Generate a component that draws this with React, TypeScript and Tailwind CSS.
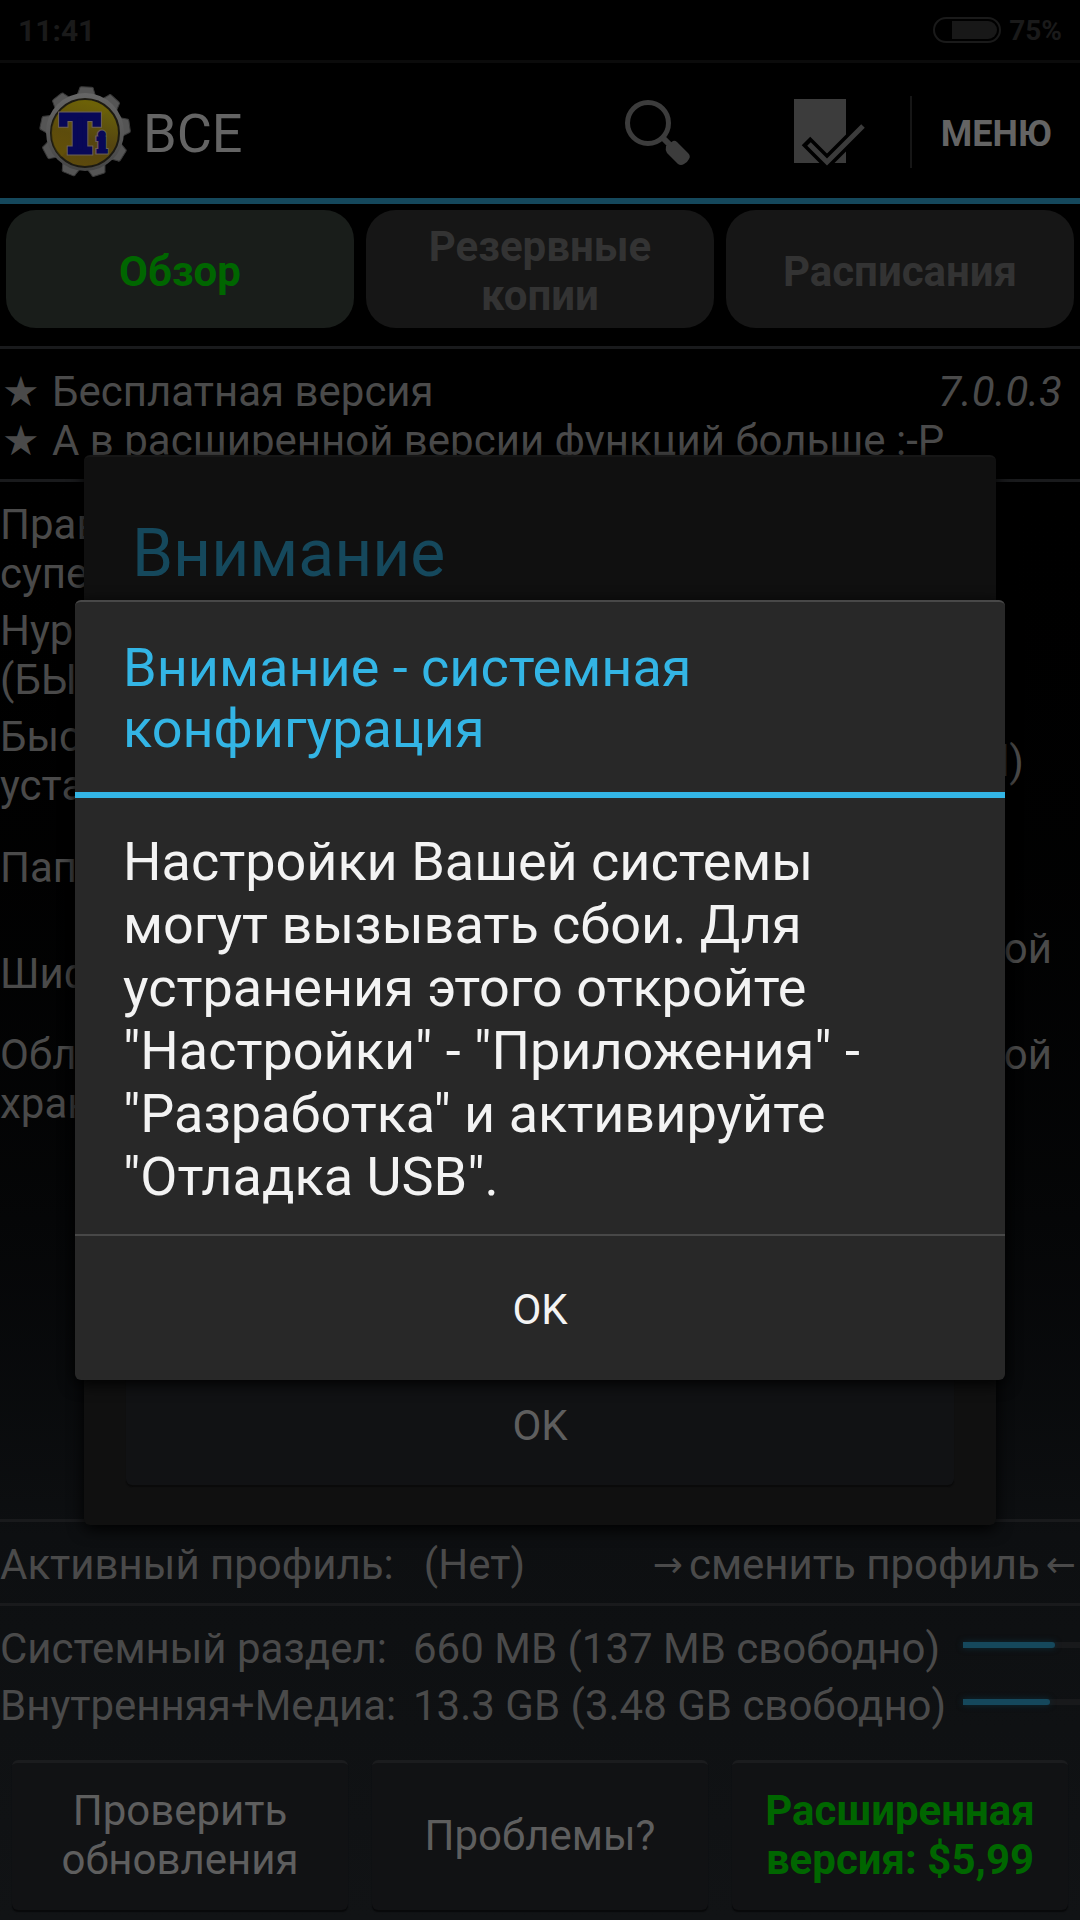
import { useState } from 'react';
import type { ReactNode } from 'react';
import { clsx } from 'clsx';

const tabs = [
  { id: 'overview', label: 'Обзор' },
  { id: 'backups', label: 'Резервные копии' },
  { id: 'schedules', label: 'Расписания' },
];

const statusRows: { label: ReactNode; value?: ReactNode; pad?: string }[] = [
  { label: <>Права<br />супер:</> },
  { label: <>Нурег<br />(БЫСТР):</> },
  { label: <>Быстрая<br />установка:</>, value: '(all)', pad: 'pr-14' },
  { label: 'Папка:' },
  { label: 'Шифр:', value: <>в расширенной<br />версии</>, pad: 'pr-7' },
  { label: <>Облачное<br />хранилище:</>, value: <>в расширенной<br />версии</>, pad: 'pr-7' },
];

const storage = [
  { id: 'system', label: 'Системный раздел:', value: '660 MB (137 MB свободно)', used: 79 },
  { id: 'media', label: 'Внутренняя+Медиа:', value: '13.3 GB (3.48 GB свободно)', used: 74 },
];

function Logo() {
  return (
    <svg className="size-[92px] shrink-0" viewBox="0 0 92 92" aria-hidden="true">
      <defs>
        <linearGradient id="gear" x1="0" y1="0" x2="0" y2="1">
          <stop offset="0" stopColor="#666" />
          <stop offset="0.5" stopColor="#585858" />
          <stop offset="1" stopColor="#444" />
        </linearGradient>
        <linearGradient id="disc" x1="0.3" y1="1" x2="0.6" y2="0">
          <stop offset="0" stopColor="#5e4a0c" />
          <stop offset="0.45" stopColor="#554510" />
          <stop offset="1" stopColor="#6b640a" />
        </linearGradient>
      </defs>
      {[2, 42, 82, 122, 162, 202, 242, 282, 322].map((angle) => (
        <path
          key={angle}
          d="M36 12 L39 3 Q39 1 41 1 L51 1 Q53 1 53 3 L56 12 Z"
          fill="#555"
          stroke="#3a3a3a"
          strokeWidth="1"
          transform={`rotate(${angle} 46 46)`}
        />
      ))}
      <circle cx="46" cy="46" r="39" fill="url(#gear)" />
      <circle cx="46" cy="47" r="34" fill="url(#disc)" stroke="#1c1a12" strokeWidth="2" />
      <path d="M22 71 L70 24 A34 34 0 0 0 14 36 A34 34 0 0 0 22 71Z" fill="#786200" opacity="0.25" />
      <g fontFamily="'DejaVu Serif', serif" fontWeight="700" stroke="#6b6058" strokeWidth="7" fill="#6b6058">
        <text x="22" y="66" fontSize="51">T</text>
        <text x="58" y="66" fontSize="26" strokeWidth="5">i</text>
      </g>
      <g fontFamily="'DejaVu Serif', serif" fontWeight="700" stroke="#080857" strokeWidth="5" fill="#080857">
        <text x="22" y="66" fontSize="51">T</text>
        <text x="58" y="66" fontSize="26" strokeWidth="3">i</text>
      </g>
    </svg>
  );
}

function SearchIcon() {
  return (
    <svg className="size-[72px]" viewBox="0 0 72 72" aria-hidden="true">
      <circle cx="26" cy="27" r="20.5" fill="none" stroke="#3c3c3c" strokeWidth="5" />
      <path d="M40 41 L49 50" stroke="#3c3c3c" strokeWidth="6" />
      <path
        d="M44 50 L51 45 Q53 44 55 46 L66 57 Q69 60 67 63 Q65 67 62 68 Q59 70 56 68 L45 57 Q43 54 44 50Z"
        fill="#3c3c3c"
      />
    </svg>
  );
}

function CheckIcon() {
  return (
    <svg className="size-[76px]" viewBox="0 0 76 76" aria-hidden="true">
      <path d="M4 4 H56 V68 H4Z" fill="#3c3c3c" />
      <path d="M16 46 L37 67 L74 30" fill="none" stroke="#000" strokeWidth="12" />
      <path d="M19 49 L37 67 L73 31" fill="none" stroke="#3c3c3c" strokeWidth="5" />
    </svg>
  );
}

function StatusBar() {
  return (
    <div className="flex h-[63px] items-center justify-between border-b-[3px] border-[#0b0b0b] bg-black px-[18px] font-bold text-[#1a1a1a]">
      <span className="text-[30px]">11:41</span>
      <div className="flex items-center gap-2">
        <div className="flex h-[26px] w-[68px] justify-end rounded-full border-2 border-[#1a1a1a] p-[2px]">
          <div className="w-[45px] rounded-r-full bg-[#181818]" />
        </div>
        <span className="text-[28px]">75%</span>
      </div>
    </div>
  );
}

function Feature({ children }: { children: ReactNode }) {
  return (
    <p className="flex">
      <span className="w-[52px] pl-[2px] font-['DejaVu_Sans']">★</span>
      <span>{children}</span>
    </p>
  );
}

export default function App() {
  const [tab, setTab] = useState('overview');

  return (
    <div className="relative flex min-h-screen flex-col bg-linear-to-b from-black from-20% via-[#0d0f11] via-80% to-[#111315] font-[Roboto,sans-serif] text-[42px] leading-[49px] text-[#4a4a4a]">
      <StatusBar />

      <header className="flex h-[141px] items-center border-b-[6px] border-[#15485c] pt-[2px] pl-[39px] text-[#646464]">
        <Logo />
        <h1 className="ml-3 pt-1 text-[54px]">ВСЕ</h1>
        <div className="ml-auto flex items-center">
          <button aria-label="Поиск" className="mr-[96px]">
            <SearchIcon />
          </button>
          <button aria-label="Пакетные действия" className="mr-[44px] pt-[2px]">
            <CheckIcon />
          </button>
          <button className="flex h-[72px] items-center border-l-2 border-[#161616] pt-[6px] pr-[28px] pl-[29px] text-[36px] font-bold">
            МЕНЮ
          </button>
        </div>
      </header>

      <nav className="grid grid-cols-3 gap-3 px-[6px] pt-[6px] pb-[18px]">
        {tabs.map(({ id, label }) => (
          <button
            key={id}
            onClick={() => setTab(id)}
            className={clsx(
              'h-[118px] rounded-[30px] px-10 pt-1 font-bold',
              tab === id ? 'bg-[#191d1a] text-[#006600]' : 'bg-[#161616] text-[#333333]'
            )}
          >
            {label}
          </button>
        ))}
      </nav>

      <section className="border-y-[3px] border-[#191a1c] pt-[18px] pb-[14px]">
        <div className="flex justify-between pr-[18px]">
          <Feature>Бесплатная версия</Feature>
          <span className="italic">7.0.0.3</span>
        </div>
        <Feature>А в расширенной версии функций больше :-P</Feature>
      </section>

      <section className="pt-[14px]">
        {statusRows.map(({ label, value, pad }, i) => (
          <div key={i} className="flex h-[106px] items-center justify-between">
            <span>{label}</span>
            {value && <span className={pad}>{value}</span>}
          </div>
        ))}
      </section>

      <section className="mt-auto flex justify-between border-y-[3px] border-[#191a1c] pt-[18px] pr-1 pb-[14px]">
        <p className="flex gap-[30px]">
          <span>Активный профиль:</span>
          <span>(Нет)</span>
        </p>
        <button className="flex gap-[6px]">
          <span className="font-['DejaVu_Sans'] text-[36px]">→</span>
          сменить профиль
          <span className="font-['DejaVu_Sans'] text-[36px]">←</span>
        </button>
      </section>

      <section className="flex flex-col gap-2 pt-[18px] pb-[30px]">
        {storage.map(({ id, label, value, used }) => (
          <div key={id} className="flex items-center">
            <span className="w-[413px] shrink-0">{label}</span>
            <span className="w-[550px] shrink-0">{value}</span>
            <div className="mb-2 h-[6px] flex-1 bg-[#18191b]">
              <div
                className="h-full rounded-r-sm bg-[#15485c] shadow-[0_0_6px_#0e2c38]"
                style={{ width: `${used}%` }}
              />
            </div>
          </div>
        ))}
      </section>

      <div className="grid grid-cols-3 gap-6 px-3 pb-[10px] text-[#5e5e5e]">
        <button className="h-[150px] rounded-md border-t-[3px] border-[#1b1c1e] bg-[#111214] px-8 pb-[3px] shadow-[0_2px_1px_#08090a]">
          Проверить обновления
        </button>
        <button className="h-[150px] rounded-md border-t-[3px] border-[#1b1c1e] bg-[#111214] px-8 pb-[3px] shadow-[0_2px_1px_#08090a]">
          Проблемы?
        </button>
        <button className="h-[150px] rounded-md border-t-[3px] border-[#1b1c1e] bg-[#111214] px-6 pb-[3px] font-bold text-[#006600] shadow-[0_2px_1px_#08090a]">
          Расширенная версия: $5,99
        </button>
      </div>

      {/* first warning, dimmed by the one on top */}
      <div className="absolute inset-x-0 top-[60px] bottom-0 flex items-center px-[84px]">
        <div className="w-full rounded-md border-t-2 border-[#161616] bg-[#101010] px-[42px] pt-[58px] pb-[40px] shadow-[0_4px_16px_#000]">
          <h2 className="px-[6px] text-[66px] leading-[77px] text-[#15485c]">Внимание</h2>
          <div className="h-[773px]" />
          <button className="h-[120px] w-full rounded-md bg-[#111214] text-[#5e5e5e] shadow-[0_2px_1px_#0a0a0a]">
            OK
          </button>
        </div>
      </div>

      <div className="absolute inset-x-0 top-[60px] bottom-0 flex items-center px-[75px]">
        <div
          role="dialog"
          aria-labelledby="dialog-title"
          className="w-full rounded-md border-t-2 border-[#484848] bg-[#282828] shadow-[0_4px_16px_#000]"
        >
          <h2
            id="dialog-title"
            className="border-b-[6px] border-[#33b5e5] px-12 pt-[35px] pb-[33px] text-[54px] leading-[61px] text-[#33b5e5]"
          >
            Внимание - системная конфигурация
          </h2>
          <p className="px-12 pt-8 pb-[26px] text-[54px] leading-[63px] text-[#f3f3f3]">
            Настройки Вашей системы могут вызывать сбои. Для устранения этого откройте "Настройки" -
            "Приложения" - "Разработка" и активируйте "Отладка USB".
          </p>
          <button className="h-[146px] w-full border-t-2 border-[#484848] pt-[2px] text-[#f3f3f3]">OK</button>
        </div>
      </div>
    </div>
  );
}
